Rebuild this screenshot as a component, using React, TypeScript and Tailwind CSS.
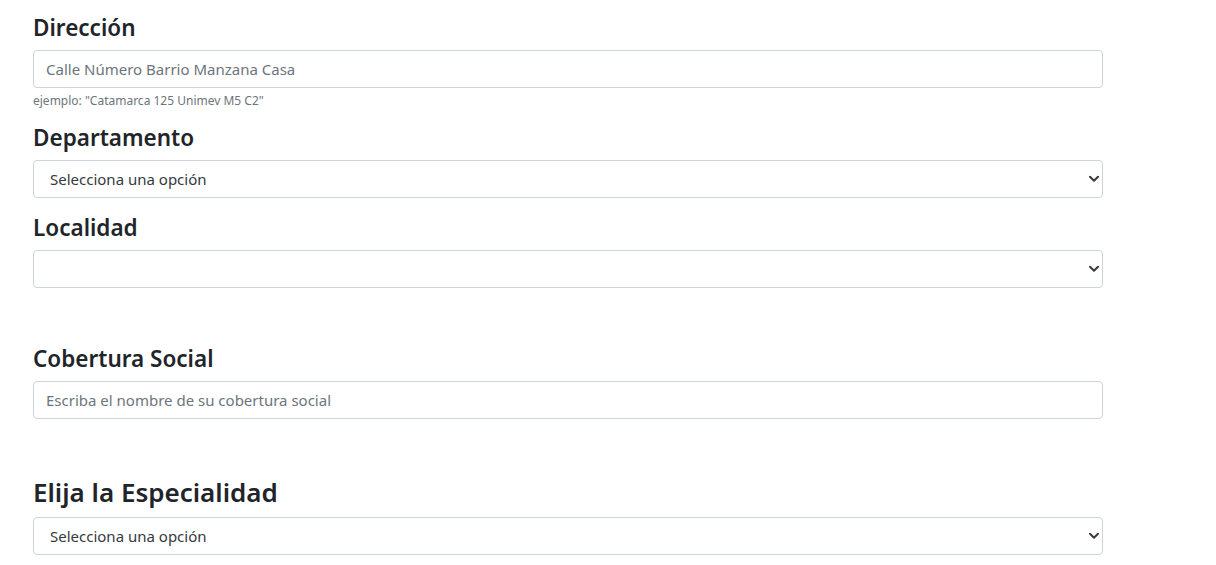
const font = { fontFamily: '"Noto Sans", "Open Sans", sans-serif' };

function Chevron() {
  return (
    <svg
      className="pointer-events-none absolute right-[4px] top-1/2 -translate-y-1/2"
      width="10"
      height="7"
      viewBox="0 0 10 7"
      fill="none"
    >
      <path d="M1 1.2 L5 5.2 L9 1.2" stroke="#3a3a3a" strokeWidth="2" strokeLinecap="round" strokeLinejoin="round" />
    </svg>
  );
}

function Select({ value }: { value?: string }) {
  return (
    <div className="relative h-[38px] w-full">
      <select
        className="h-full w-full appearance-none rounded-[4px] border border-[#ced4da] bg-white pl-[16px] pr-8 text-[15px] text-[#343a40] outline-none"
        style={font}
        defaultValue=""
      >
        <option value="">{value ?? ''}</option>
      </select>
      <Chevron />
    </div>
  );
}

function Input({ placeholder }: { placeholder: string }) {
  return (
    <input
      className="block h-[38px] w-full rounded-[4px] border border-[#ced4da] bg-white px-[12px] text-[15px] text-[#495057] outline-none placeholder:text-[#6c757d]"
      style={font}
      placeholder={placeholder}
    />
  );
}

function H4({ children, className = '' }: { children: React.ReactNode; className?: string }) {
  return (
    <h4 className={`mb-[8px] text-[22.5px] font-semibold leading-[29px] text-[#212529] ${className}`}>{children}</h4>
  );
}

export default function App() {
  return (
    <div className="min-h-[565px] bg-white" style={font}>
      <div className="ml-[33px] w-[1070px] pt-[13px]">
        <H4>Dirección</H4>
        <Input placeholder="Calle Número Barrio Manzana Casa" />
        <small className="mt-[4px] block text-[12px] leading-[18px] text-[#6c757d]">
          ejemplo: "Catamarca 125 Unimev M5 C2"
        </small>
        <H4 className="mt-[13px]">Departamento</H4>
        <Select value="Selecciona una opción" />
        <H4 className="mt-[15px]">Localidad</H4>
        <Select />
        <H4 className="mt-[56px]">Cobertura Social</H4>
        <Input placeholder="Escriba el nombre de su cobertura social" />
        <h3 className="mb-[8px] mt-[56px] text-[26px] font-semibold leading-[34px] text-[#212529]">
          Elija la Especialidad
        </h3>
        <Select value="Selecciona una opción" />
      </div>
    </div>
  );
}
